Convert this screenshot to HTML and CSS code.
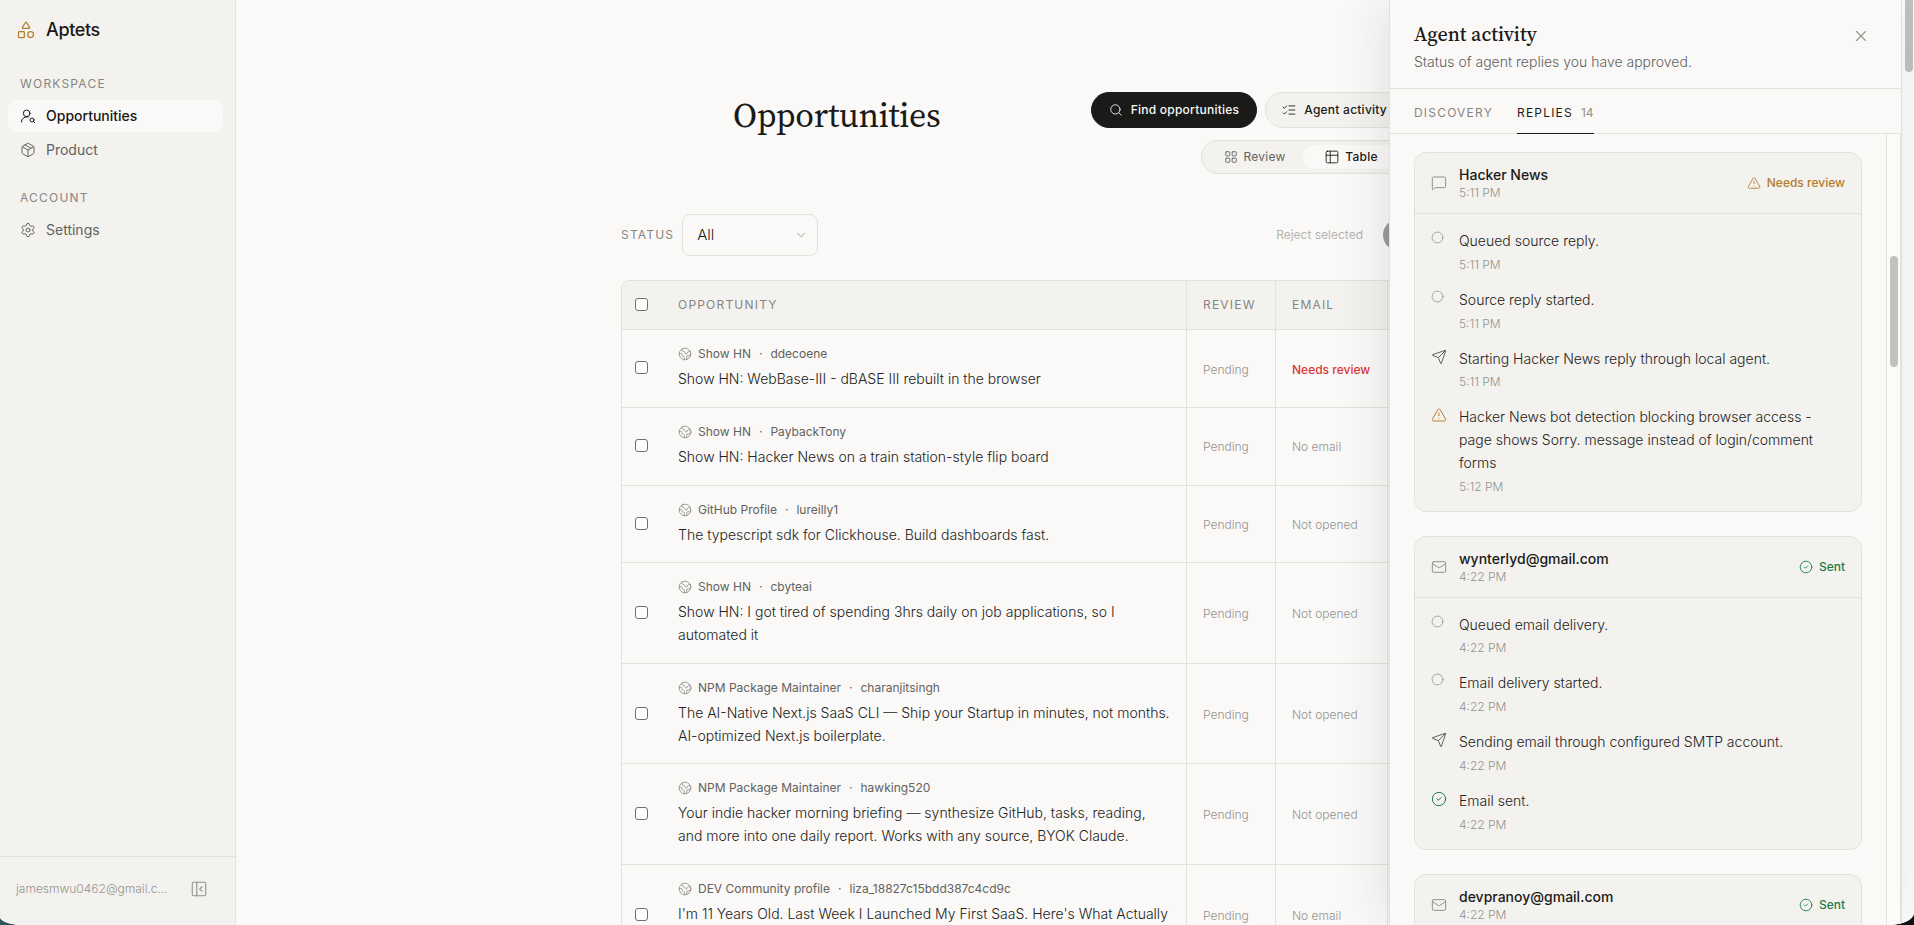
FILE: index.html
```html
<!DOCTYPE html>
<html lang="en">
<head>
<meta charset="utf-8">
<title>Aptets – Opportunities</title>
<link rel="stylesheet" href="styles.css">
</head>
<body>
<svg class="sprite" aria-hidden="true">
  <symbol id="i-shapes" viewBox="0 0 24 24"><path d="M8.3 10a.7.7 0 0 1-.626-1.079L11.4 3a.7.7 0 0 1 1.198-.043L16.3 8.9a.7.7 0 0 1-.572 1.1Z"/><rect x="3" y="14" width="7" height="7" rx="1"/><circle cx="17.5" cy="17.5" r="3.5"/></symbol>
  <symbol id="i-user-search" viewBox="0 0 24 24"><circle cx="10" cy="8" r="5"/><path d="M2 21a8 8 0 0 1 10.434-7.62"/><circle cx="18" cy="18" r="3"/><path d="m22 22-1.9-1.9"/></symbol>
  <symbol id="i-package" viewBox="0 0 24 24"><path d="M11 21.73a2 2 0 0 0 2 0l7-4A2 2 0 0 0 21 16V8a2 2 0 0 0-1-1.73l-7-4a2 2 0 0 0-2 0l-7 4A2 2 0 0 0 3 8v8a2 2 0 0 0 1 1.73z"/><path d="M12 22V12"/><path d="m3.3 7 8.7 5 8.7-5"/><path d="m7.5 4.27 9 5.15"/></symbol>
  <symbol id="i-settings" viewBox="0 0 24 24"><path d="M9.671 4.136a2.34 2.34 0 0 1 4.659 0 2.34 2.34 0 0 0 3.319 1.915 2.34 2.34 0 0 1 2.33 4.033 2.34 2.34 0 0 0 0 3.831 2.34 2.34 0 0 1-2.33 4.033 2.34 2.34 0 0 0-3.319 1.915 2.34 2.34 0 0 1-4.659 0 2.34 2.34 0 0 0-3.32-1.915 2.34 2.34 0 0 1-2.33-4.033 2.34 2.34 0 0 0 0-3.831A2.34 2.34 0 0 1 6.35 6.051a2.34 2.34 0 0 0 3.319-1.915"/><circle cx="12" cy="12" r="3"/></symbol>
  <symbol id="i-panel" viewBox="0 0 24 24"><rect x="3" y="3" width="18" height="18" rx="2"/><path d="M9 3v18"/><path d="m16 15-3-3 3-3"/></symbol>
  <symbol id="i-search" viewBox="0 0 24 24"><circle cx="11" cy="11" r="8"/><path d="m21 21-4.3-4.3"/></symbol>
  <symbol id="i-list" viewBox="0 0 24 24"><path d="m2 17 2 2 4-4"/><path d="m2 7 2 2 4-4"/><path d="M12 5h10"/><path d="M12 12h10"/><path d="M12 19h10"/></symbol>
  <symbol id="i-grid" viewBox="0 0 24 24"><rect x="3" y="3" width="7" height="7" rx="1"/><rect x="14" y="3" width="7" height="7" rx="1"/><rect x="14" y="14" width="7" height="7" rx="1"/><rect x="3" y="14" width="7" height="7" rx="1"/></symbol>
  <symbol id="i-table" viewBox="0 0 24 24"><rect x="2" y="2" width="20" height="20" rx="2"/><path d="M9 2v20"/><path d="M2 9h20"/></symbol>
  <symbol id="i-earth" viewBox="0 0 24 24"><path d="M21.54 15H17a2 2 0 0 0-2 2v4.54"/><path d="M7 3.34V5a3 3 0 0 0 3 3a2 2 0 0 1 2 2c0 1.1.9 2 2 2a2 2 0 0 0 2-2c0-1.1.9-2 2-2h3.17"/><path d="M11 21.95V18a2 2 0 0 0-2-2a2 2 0 0 1-2-2v-1a2 2 0 0 0-2-2H2.05"/><circle cx="12" cy="12" r="10"/></symbol>
  <symbol id="i-x" viewBox="0 0 24 24"><path d="M18 6 6 18"/><path d="m6 6 12 12"/></symbol>
  <symbol id="i-message" viewBox="0 0 24 24"><path d="M22 17a2 2 0 0 1-2 2H6.828a2 2 0 0 0-1.414.586l-2.202 2.202A.71.71 0 0 1 2 21.286V5a2 2 0 0 1 2-2h16a2 2 0 0 1 2 2z"/></symbol>
  <symbol id="i-mail" viewBox="0 0 24 24"><rect x="2" y="4" width="20" height="16" rx="2"/><path d="m22 7-8.97 5.7a1.94 1.94 0 0 1-2.06 0L2 7"/></symbol>
  <symbol id="i-warning" viewBox="0 0 24 24"><path d="m21.73 18-8-14a2 2 0 0 0-3.48 0l-8 14A2 2 0 0 0 4 21h16a2 2 0 0 0 1.73-3"/><path d="M12 9v4"/><path d="M12 17h.01"/></symbol>
  <symbol id="i-check" viewBox="0 0 24 24"><circle cx="12" cy="12" r="10"/><path d="m9 12 2 2 4-4"/></symbol>
  <symbol id="i-circle" viewBox="0 0 24 24"><circle cx="12" cy="12" r="10"/></symbol>
  <symbol id="i-send" viewBox="0 0 24 24"><path d="M14.536 21.686a.5.5 0 0 0 .937-.024l6.5-19a.496.496 0 0 0-.635-.635l-19 6.5a.5.5 0 0 0-.024.937l7.93 3.18a2 2 0 0 1 1.112 1.11z"/><path d="m21.854 2.147-10.94 10.939"/></symbol>
  <symbol id="i-chevron" viewBox="0 0 24 24"><path d="m6 9 6 6 6-6"/></symbol>
</svg>

<div class="app">
  <aside class="sidebar">
    <div class="brand"><svg class="icon icon-20"><use href="#i-shapes"/></svg><span>Aptets</span></div>
    <nav class="nav">
      <h2 class="nav-label">Workspace</h2>
      <a class="nav-item is-active" href="#"><svg class="icon icon-16"><use href="#i-user-search"/></svg>Opportunities</a>
      <a class="nav-item" href="#"><svg class="icon icon-16"><use href="#i-package"/></svg>Product</a>
      <h2 class="nav-label">Account</h2>
      <a class="nav-item" href="#"><svg class="icon icon-16"><use href="#i-settings"/></svg>Settings</a>
    </nav>
    <div class="account">
      <span class="account-email">jamesmwu0462@gmail.com</span>
      <button class="icon-button" type="button" aria-label="Collapse sidebar"><svg class="icon icon-18"><use href="#i-panel"/></svg></button>
    </div>
  </aside>

  <main class="main">
    <header class="page-header">
      <h1 class="page-title">Opportunities</h1>
      <div class="actions">
        <div class="action-row">
          <button class="pill pill-dark" type="button"><svg class="icon icon-14"><use href="#i-search"/></svg>Find opportunities</button>
          <button class="pill pill-light" type="button"><svg class="icon icon-14"><use href="#i-list"/></svg>Agent activity</button>
        </div>
        <div class="segment">
          <button class="segment-item" type="button"><svg class="icon icon-14"><use href="#i-grid"/></svg>Review</button>
          <button class="segment-item is-active" type="button"><svg class="icon icon-14"><use href="#i-table"/></svg>Table</button>
        </div>
      </div>
    </header>

    <div class="toolbar">
      <label class="caps" for="status">Status</label>
      <div class="select-wrap">
        <select class="select" id="status"><option>All</option></select>
        <svg class="icon icon-14 select-arrow"><use href="#i-chevron"/></svg>
      </div>
      <div class="bulk">
        <button class="bulk-button" type="button" disabled>Reject selected</button>
        <button class="bulk-button bulk-primary" type="button" aria-label="Approve selected" disabled></button>
      </div>
    </div>

    <div class="table-frame">
      <table class="table">
        <colgroup><col class="col-check"><col class="col-opp"><col class="col-review"><col class="col-email"><col></colgroup>
        <thead>
          <tr><th><input class="check" type="checkbox" aria-label="Select all"></th><th>Opportunity</th><th>Review</th><th>Email</th><th></th></tr>
        </thead>
        <tbody>
          <tr>
            <td><input class="check" type="checkbox" aria-label="Select ddecoene"></td>
            <td><div class="meta"><svg class="icon icon-14"><use href="#i-earth"/></svg><span>Show HN</span><span class="dot">·</span><span>ddecoene</span></div><p class="title">Show HN: WebBase-III - dBASE III rebuilt in the browser</p></td>
            <td>Pending</td><td class="alert">Needs review</td><td></td>
          </tr>
          <tr>
            <td><input class="check" type="checkbox" aria-label="Select PaybackTony"></td>
            <td><div class="meta"><svg class="icon icon-14"><use href="#i-earth"/></svg><span>Show HN</span><span class="dot">·</span><span>PaybackTony</span></div><p class="title">Show HN: Hacker News on a train station-style flip board</p></td>
            <td>Pending</td><td>No email</td><td></td>
          </tr>
          <tr>
            <td><input class="check" type="checkbox" aria-label="Select lureilly1"></td>
            <td><div class="meta"><svg class="icon icon-14"><use href="#i-earth"/></svg><span>GitHub Profile</span><span class="dot">·</span><span>lureilly1</span></div><p class="title">The typescript sdk for Clickhouse. Build dashboards fast.</p></td>
            <td>Pending</td><td>Not opened</td><td></td>
          </tr>
          <tr>
            <td><input class="check" type="checkbox" aria-label="Select cbyteai"></td>
            <td><div class="meta"><svg class="icon icon-14"><use href="#i-earth"/></svg><span>Show HN</span><span class="dot">·</span><span>cbyteai</span></div><p class="title">Show HN: I got tired of spending 3hrs daily on job applications, so I automated it</p></td>
            <td>Pending</td><td>Not opened</td><td></td>
          </tr>
          <tr>
            <td><input class="check" type="checkbox" aria-label="Select charanjitsingh"></td>
            <td><div class="meta"><svg class="icon icon-14"><use href="#i-earth"/></svg><span>NPM Package Maintainer</span><span class="dot">·</span><span>charanjitsingh</span></div><p class="title">The AI-Native Next.js SaaS CLI — Ship your Startup in minutes, not months. AI-optimized Next.js boilerplate.</p></td>
            <td>Pending</td><td>Not opened</td><td></td>
          </tr>
          <tr>
            <td><input class="check" type="checkbox" aria-label="Select hawking520"></td>
            <td><div class="meta"><svg class="icon icon-14"><use href="#i-earth"/></svg><span>NPM Package Maintainer</span><span class="dot">·</span><span>hawking520</span></div><p class="title">Your indie hacker morning briefing — synthesize GitHub, tasks, reading, and more into one daily report. Works with any source, BYOK Claude.</p></td>
            <td>Pending</td><td>Not opened</td><td></td>
          </tr>
          <tr>
            <td><input class="check" type="checkbox" aria-label="Select liza_18827c15bdd387c4cd9c"></td>
            <td><div class="meta"><svg class="icon icon-14"><use href="#i-earth"/></svg><span>DEV Community profile</span><span class="dot">·</span><span>liza_18827c15bdd387c4cd9c</span></div><p class="title">I'm 11 Years Old. Last Week I Launched My First SaaS. Here's What Actually Happened.</p></td>
            <td>Pending</td><td>No email</td><td></td>
          </tr>
        </tbody>
      </table>
    </div>
  </main>

  <div class="page-track"><div class="page-thumb"></div></div>

  <section class="drawer" aria-label="Agent activity">
    <header class="drawer-header">
      <div>
        <h2 class="drawer-title">Agent activity</h2>
        <p class="drawer-sub">Status of agent replies you have approved.</p>
      </div>
      <button class="icon-button" type="button" aria-label="Close"><svg class="icon icon-18"><use href="#i-x"/></svg></button>
    </header>
    <div class="tabs">
      <button class="tab" type="button">Discovery</button>
      <button class="tab is-active" type="button">Replies<span class="count">14</span></button>
    </div>
    <div class="drawer-body">
      <div class="feed">
        <article class="card">
          <header class="card-header">
            <svg class="icon icon-16"><use href="#i-message"/></svg>
            <div class="card-who"><h3 class="card-name">Hacker News</h3><p class="time">5:11 PM</p></div>
            <span class="badge amber"><svg class="icon icon-14"><use href="#i-warning"/></svg>Needs review</span>
          </header>
          <ol class="steps">
            <li class="step"><svg class="icon icon-13"><use href="#i-circle"/></svg><div><p class="step-text">Queued source reply.</p><p class="time">5:11 PM</p></div></li>
            <li class="step"><svg class="icon icon-13"><use href="#i-circle"/></svg><div><p class="step-text">Source reply started.</p><p class="time">5:11 PM</p></div></li>
            <li class="step"><svg class="icon icon-16 dim"><use href="#i-send"/></svg><div><p class="step-text">Starting Hacker News reply through local agent.</p><p class="time">5:11 PM</p></div></li>
            <li class="step"><svg class="icon icon-16 amber"><use href="#i-warning"/></svg><div><p class="step-text">Hacker News bot detection blocking browser access - page shows Sorry. message instead of login/comment forms</p><p class="time">5:12 PM</p></div></li>
          </ol>
        </article>
        <article class="card">
          <header class="card-header">
            <svg class="icon icon-16"><use href="#i-mail"/></svg>
            <div class="card-who"><h3 class="card-name">wynterlyd@gmail.com</h3><p class="time">4:22 PM</p></div>
            <span class="badge green"><svg class="icon icon-14"><use href="#i-check"/></svg>Sent</span>
          </header>
          <ol class="steps">
            <li class="step"><svg class="icon icon-13"><use href="#i-circle"/></svg><div><p class="step-text">Queued email delivery.</p><p class="time">4:22 PM</p></div></li>
            <li class="step"><svg class="icon icon-13"><use href="#i-circle"/></svg><div><p class="step-text">Email delivery started.</p><p class="time">4:22 PM</p></div></li>
            <li class="step"><svg class="icon icon-16 dim"><use href="#i-send"/></svg><div><p class="step-text">Sending email through configured SMTP account.</p><p class="time">4:22 PM</p></div></li>
            <li class="step"><svg class="icon icon-16 green"><use href="#i-check"/></svg><div><p class="step-text">Email sent.</p><p class="time">4:22 PM</p></div></li>
          </ol>
        </article>
        <article class="card">
          <header class="card-header">
            <svg class="icon icon-16"><use href="#i-mail"/></svg>
            <div class="card-who"><h3 class="card-name">devpranoy@gmail.com</h3><p class="time">4:22 PM</p></div>
            <span class="badge green"><svg class="icon icon-14"><use href="#i-check"/></svg>Sent</span>
          </header>
        </article>
      </div>
      <div class="feed-track"><div class="feed-thumb"></div></div>
    </div>
  </section>
</div>
</body>
</html>
```
FILE: styles.css
```css
:root {
  --paper: #faf9f7;
  --shade: #f3f2ee;
  --line: #e2e1dd;
  --ink: #1a1a18;
  --text: #232321;
  --dim: #62625e;
  --faint: #93938e;
  --amber: #b47d2c;
  --green: #1e7d46;
  --red: #d93838;
  --sans: Inter, "Liberation Sans", sans-serif;
  --serif: "Source Serif 4", "Source Serif Pro", "Noto Serif CJK SC", "Liberation Serif", serif;
}

* { box-sizing: border-box; }
h1, h2, h3, p, ol { margin: 0; padding: 0; }
button, select { font: inherit; color: inherit; }
button { border: 0; background: none; padding: 0; }

body {
  margin: 0;
  background: linear-gradient(90deg, #2a5a60 0, #1c3836 30px, #111 60px);
  color: var(--text);
  font: 300 14px/1.625 var(--sans);
}

.sprite { position: absolute; width: 0; height: 0; }
.icon { flex: none; fill: none; stroke: currentColor; stroke-width: 1.5; stroke-linecap: round; stroke-linejoin: round; display: block; }
.icon-13 { width: 13px; height: 13px; }
.icon-14 { width: 14px; height: 14px; }
.icon-16 { width: 16px; height: 16px; }
.icon-18 { width: 18px; height: 18px; }
.icon-20 { width: 20px; height: 20px; }

.app {
  position: relative;
  display: flex;
  height: 100vh;
  overflow: hidden;
  background: var(--paper);
  border-radius: 0 0 26px 24px / 0 0 12px 8px;
}

/* Sidebar */
.sidebar {
  flex: none;
  display: flex;
  flex-direction: column;
  width: 236px;
  background: var(--shade);
  border-right: 1px solid var(--line);
}
.brand {
  display: flex;
  align-items: center;
  gap: 10px;
  height: 60px;
  padding-left: 16px;
  color: var(--ink);
  font-size: 18px;
  font-weight: 500;
  letter-spacing: -0.02em;
}
.brand .icon { color: var(--amber); }
.nav { flex: 1; display: flex; flex-direction: column; gap: 2px; padding: 0 12px 0 8px; }
.nav-label {
  padding: 13px 12px 3px;
  color: #868681;
  font-size: 12px;
  font-weight: 400;
  line-height: 22px;
  letter-spacing: 0.1em;
  text-transform: uppercase;
}
.nav-item + .nav-label { padding-top: 19px; }
.nav-item {
  display: flex;
  align-items: center;
  gap: 10px;
  height: 32px;
  padding: 0 12px;
  border-radius: 8px;
  color: var(--dim);
  font-weight: 400;
  text-decoration: none;
}
.nav-item.is-active { background: var(--paper); color: var(--ink); font-weight: 500; }
.account {
  display: flex;
  align-items: center;
  justify-content: space-between;
  height: 69px;
  padding: 0 27px 4px 16px;
  border-top: 1px solid var(--line);
  color: var(--faint);
  font-size: 12px;
}
.account-email { width: 152px; overflow: hidden; text-overflow: ellipsis; white-space: nowrap; }
.icon-button { color: var(--faint); }

/* Main column */
.main { flex: 1; min-width: 0; overflow: hidden; padding: 92px 24px 0; }
.page-header {
  display: flex;
  align-items: flex-start;
  justify-content: space-between;
  max-width: 672px;
  margin: 0 auto;
}
.page-title { color: var(--ink); font: 400 34px/46px var(--serif); letter-spacing: -0.01em; }
.actions { display: flex; flex-direction: column; align-items: flex-end; gap: 12px; }
.action-row { display: flex; gap: 8px; }
.pill {
  display: flex;
  align-items: center;
  gap: 8px;
  height: 36px;
  padding: 0 17px 0 16px;
  border: 1px solid var(--line);
  border-radius: 18px;
  background: var(--shade);
  color: var(--ink);
  font-size: 12px;
  font-weight: 500;
  letter-spacing: 0.02em;
  white-space: nowrap;
}
.pill-dark { padding: 0 17px; background: var(--ink); border-color: var(--ink); color: var(--paper); }
.segment {
  display: grid;
  grid-template-columns: 97px 97px;
  padding: 4px;
  border: 1px solid var(--line);
  border-radius: 17px;
  background: var(--shade);
}
.segment-item {
  display: flex;
  align-items: center;
  justify-content: center;
  gap: 6px;
  height: 24px;
  border-radius: 12px;
  color: var(--dim);
  font-size: 12px;
  font-weight: 400;
  letter-spacing: 0.02em;
}
.segment-item.is-active { background: var(--paper); color: var(--ink); font-weight: 500; }

.toolbar {
  display: flex;
  align-items: center;
  gap: 8px;
  max-width: 896px;
  margin: 40px auto 24px;
}
.caps { color: #868681; font-size: 12px; font-weight: 400; letter-spacing: 0.1em; text-transform: uppercase; }
.select-wrap { position: relative; }
.select {
  appearance: none;
  display: block;
  width: 136px;
  height: 42px;
  padding: 0 14px;
  border: 1px solid var(--line);
  border-radius: 8px;
  background: var(--paper);
  color: var(--ink);
  font-size: 15px;
}
.select-arrow { position: absolute; right: 10px; top: 14px; color: var(--faint); }
.bulk { display: flex; gap: 8px; margin-left: auto; }
.bulk-button {
  height: 32px;
  padding: 0 12px;
  border-radius: 16px;
  color: #b5b4b0;
  font-size: 12px;
  font-weight: 400;
  white-space: nowrap;
}
.bulk-primary { width: 134px; background: #9b9b99; }

.table-frame { max-width: 896px; margin: 0 auto; border: 1px solid var(--line); border-radius: 8px; overflow: hidden; }
.table { width: 100%; table-layout: fixed; border-spacing: 0; }
.col-check { width: 40px; }
.col-opp { width: 524px; }
.col-review { width: 89px; }
.col-email { width: 112px; }
.table th {
  height: 49px;
  padding: 0 16px 1px;
  background: var(--shade);
  border-bottom: 1px solid var(--line);
  color: #868681;
  font-size: 12px;
  font-weight: 400;
  letter-spacing: 0.1em;
  text-align: left;
  text-transform: uppercase;
}
.table td { padding: 14px 16px 16px; border-bottom: 1px solid var(--line); color: var(--faint); font-size: 12px; }
.table th:nth-child(n + 3), .table td:nth-child(n + 3) { border-left: 1px solid var(--line); }
.table td:nth-child(n + 3) { padding: 16px 16px 14px; }
.table tr > :first-child { padding: 0 0 1px 13px; }
.table td.alert { color: var(--red); font-weight: 500; }
.check {
  appearance: none;
  display: block;
  width: 13px;
  height: 13px;
  margin: 0;
  border: 1px solid #6f6f6f;
  border-radius: 3px;
  background: #fff;
}
.meta { display: flex; align-items: center; gap: 6px; margin-bottom: 4px; color: var(--dim); font-weight: 400; line-height: 20px; }
.meta .icon { color: var(--faint); }
.dot { padding: 0 2px; }
.title { color: var(--text); font-size: 14px; }

/* Page scrollbar */
.page-track { flex: none; width: 12px; background: #fbfbfa; }
.page-thumb { width: 8px; height: 74px; margin: -2px auto 0 3px; border-radius: 4px; background: #c1c1c0; }

/* Drawer */
.drawer {
  position: absolute;
  top: 0;
  right: 12px;
  bottom: 0;
  display: flex;
  flex-direction: column;
  width: 513px;
  background: var(--paper);
  border: solid var(--line);
  border-width: 0 1px;
  box-shadow: -8px 0 48px rgba(0, 0, 0, 0.09);
}
.drawer-header { display: flex; justify-content: space-between; align-items: flex-start; padding: 20px 31px 16px 24px; border-bottom: 1px solid var(--line); }
.drawer-header .icon-button { margin-top: 7px; }
.drawer-title { margin-bottom: 4px; color: var(--ink); font: 500 20px/28px var(--serif); }
.drawer-sub { color: var(--dim); line-height: 20px; }
.tabs { display: flex; gap: 24px; padding: 0 24px; border-bottom: 1px solid var(--line); }
.tab {
  height: 45px;
  margin-bottom: -1px;
  padding-top: 4px;
  border-bottom: 1px solid transparent;
  color: #868681;
  font-size: 12px;
  font-weight: 400;
  letter-spacing: 0.1em;
  text-transform: uppercase;
}
.tab.is-active { border-color: var(--ink); color: var(--ink); }
.count { margin-left: 8px; color: var(--faint); letter-spacing: 0; }
.drawer-body { flex: 1; min-height: 0; display: flex; }
.feed { flex: 1; min-width: 0; display: flex; flex-direction: column; gap: 24px; padding: 18px 24px 0; overflow: hidden; }
.feed-track { flex: none; width: 15px; padding: 122px 0 0 3px; border: solid var(--line); border-width: 0 1px; background: #fbfbfa; }
.feed-thumb { width: 8px; height: 111px; border-radius: 4px; background: #c1c1c0; }

.card { flex: none; border: 1px solid var(--line); border-radius: 12px; background: var(--shade); }
.card-header { display: flex; align-items: center; gap: 12px; padding: 12px 16px; border-bottom: 1px solid var(--line); }
.card-header > .icon, .step > .icon { color: var(--faint); }
.card-who { flex: 1; min-width: 0; }
.card-name { color: var(--ink); font-size: 14px; font-weight: 500; line-height: 20px; }
.time { color: var(--faint); font-size: 12px; line-height: 16px; }
.badge { display: flex; align-items: center; gap: 6px; font-size: 12px; font-weight: 500; line-height: 16px; }
.steps { display: flex; flex-direction: column; gap: 16px; padding: 16px; list-style: none; }
.step { display: grid; grid-template-columns: 16px 1fr; gap: 12px; }
.step > .icon { margin-top: 1px; }
.step-text { margin-bottom: 4px; }
.step > .dim { color: var(--dim); }
.amber, .step > .amber { color: var(--amber); }
.green, .step > .green { color: var(--green); }
```
